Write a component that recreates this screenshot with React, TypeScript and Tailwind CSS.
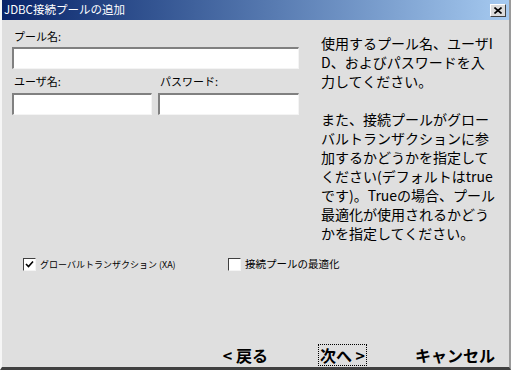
import React from "react"

const jp = { fontFamily: '"Noto Sans CJK JP", "Liberation Sans", sans-serif' }

const Field: React.FC<{ className?: string }> = ({ className = "" }) => (
  <div
    className={`h-[22px] border-t-2 border-l-2 border-b border-r border-t-[#808080] border-l-[#808080] border-b-[#f4f4f4] border-r-[#f4f4f4] bg-white ${className}`}
  />
)

const CheckBox: React.FC<{ checked?: boolean }> = ({ checked }) => (
  <div className="flex h-[13px] w-[13px] items-center justify-center border-t border-l border-b border-r border-t-[#404040] border-l-[#404040] border-b-[#f4f4f4] border-r-[#f4f4f4] bg-white">
    {checked && (
      <svg width="9" height="9" viewBox="0 0 9 9">
        <path d="M1 4 L3.5 6.5 L8 1.5" fill="none" stroke="#000" strokeWidth="1.6" />
      </svg>
    )}
  </div>
)

const App: React.FC = () => {
  return (
    <div
      className="flex h-[370px] w-[511px] flex-col border-l-2 border-r-2 border-b-[3px] border-l-[#f6f6f6] border-r-[#9a9a9a] border-b-[#404040] bg-[#dfdfdf]"
      style={jp}
    >
      {/* Title bar */}
      <div className="flex h-[20px] items-center justify-between bg-gradient-to-r from-[#0a246a] to-[#a6caf0] pl-[2px] pr-[3px]">
        <span className="text-[11.5px] leading-none text-white">JDBC接続プールの追加</span>
        <div className="flex h-[13px] w-[16px] items-center justify-center border border-t-white border-l-white border-b-[#404040] border-r-[#404040] bg-[#dcdcdc]">
          <svg width="8" height="7" viewBox="0 0 8 7">
            <path d="M0.5 0.5 L7.5 6.5 M7.5 0.5 L0.5 6.5" stroke="#000" strokeWidth="1.6" />
          </svg>
        </div>
      </div>

      {/* Body */}
      <div className="flex flex-1 flex-col px-[10px]">
        <div className="flex">
          {/* Form fields */}
          <div className="flex w-[287px] flex-col pt-[9px]">
            <label className="pl-[2px] text-[11px] leading-[14px] text-black">プール名:</label>
            <Field className="mt-[4px] w-[287px]" />
            <div className="mt-[5px] flex gap-[6px]">
              <div className="flex w-[140px] flex-col">
                <label className="pl-[2px] text-[11px] leading-[14px] text-black">ユーザ名:</label>
                <Field className="mt-[5px]" />
              </div>
              <div className="flex w-[141px] flex-col">
                <label className="pl-[2px] text-[11px] leading-[14px] text-black">パスワード:</label>
                <Field className="mt-[5px]" />
              </div>
            </div>
          </div>

          {/* Help text */}
          <div className="ml-[22px] w-[176px] break-all pt-[14px] text-[14px] leading-[19px] text-black">
            <p>使用するプール名、ユーザID、およびパスワードを入力してください。</p>
            <p className="mt-[19px]">
              また、接続プールがグローバルトランザクションに参加するかどうかを指定してください(デフォルトはtrueです)。Trueの場合、プール最適化が使用されるかどうかを指定してください。
            </p>
          </div>
        </div>

        {/* Options */}
        <div className="mt-[15px] flex items-center pl-[11px]">
          <div className="flex w-[205px] items-center gap-[4px]">
            <CheckBox checked />
            <span className="text-[9px] leading-none text-black">グローバルトランザクション (XA)</span>
          </div>
          <div className="flex items-center gap-[4px]">
            <CheckBox />
            <span className="text-[10.5px] leading-none text-black">接続プールの最適化</span>
          </div>
        </div>

        {/* Buttons */}
        <div className="mt-auto mb-[1px] flex items-center justify-end text-[16px] font-bold leading-none text-black">
          <button className="px-[2px] py-[2px]">&lt; 戻る</button>
          <button className="ml-[48px] border border-dotted border-black px-[1px] py-[2px]">次へ &gt;</button>
          <button className="ml-[46px] mr-[2px] px-[2px] py-[2px]">キャンセル</button>
        </div>
      </div>
    </div>
  )
}

export default App
